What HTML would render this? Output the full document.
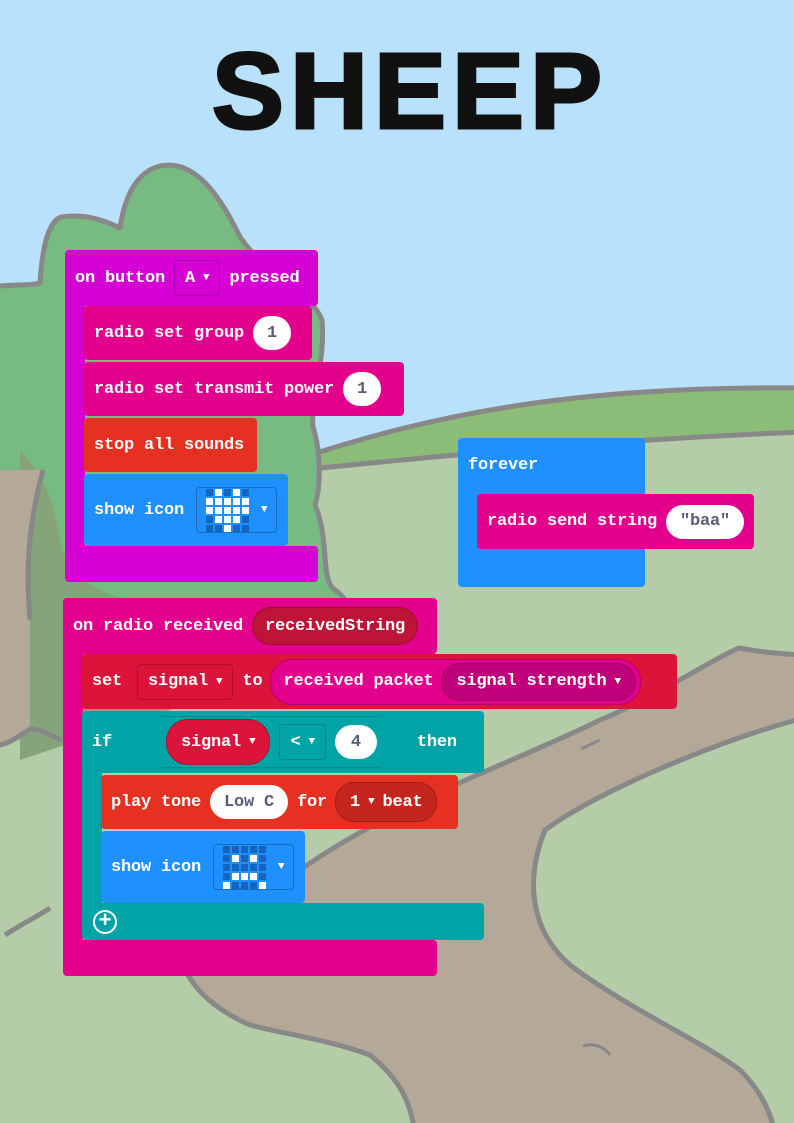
<!DOCTYPE html>
<html><head><meta charset="utf-8"><style>
body{margin:0;width:794px;height:1123px;overflow:hidden;position:relative;background:#b9e1fb;font-family:"Liberation Mono",monospace}
.b{position:absolute;box-sizing:border-box;border-radius:4px;color:#fff;font-weight:bold;font-size:17px;display:flex;align-items:center;padding-left:10px;white-space:nowrap;letter-spacing:-0.2px}
.f{display:inline-flex;align-items:center;justify-content:center;height:34px;border-radius:17px;background:#fff;color:#575e75;margin:0 9px;padding:0 14px}
.d{display:inline-flex;align-items:center;height:34px;border-radius:4px;margin:0 9px;padding:0 10px;border:1px solid rgba(0,0,0,.2)}
.r{display:inline-flex;align-items:center;height:38px;border-radius:19px;margin:0 8px;padding:0 14px;border:1px solid rgba(0,0,0,.2)}
.t{font-size:11px;margin-left:8px}
.lb{display:inline-flex;align-items:center;height:46px;padding:0 9px 0 9px;border:1px solid rgba(0,0,0,.25);border-radius:4px;margin-left:12px;box-sizing:border-box}
.led{display:inline-grid;grid-template-columns:repeat(5,7px);grid-auto-rows:7px;gap:2px}
.led i{background:#1565c0;display:block}
.led i.o{background:#fff}
</style></head><body>
<svg width="794" height="1123" style="position:absolute;left:0;top:0">
<g stroke="#888" stroke-width="5" stroke-linejoin="round">
<path d="M310 455 C420 420 560 385 804 388 L804 1133 L-10 1133 L-10 460 Z" fill="#8cbd78"/>
<path d="M300 470 C450 455 600 440 804 432 L804 1133 L-10 1133 L-10 480 Z" fill="#b4cda8"/>
<path d="M-10 287 C15 284 30 286 40 283 C42 250 48 220 62 217 C80 214 100 218 120 228 C124 200 135 172 160 166 C190 160 215 185 240 237 C270 280 310 290 322 320 C326 360 310 400 313 427 C322 455 320 490 315 505 C330 540 320 580 335 590 C350 600 355 620 352 640 L-10 700 Z" fill="#78bb82"/>
<path d="M20 450 C40 470 55 500 60 540 C70 600 140 600 200 615 L260 680 L20 760 Z" fill="#86a47a" stroke="none"/>
<path d="M-10 470 L43 470 C30 520 25 560 30 620 L30 729 C20 735 10 745 -10 747 Z" fill="#b4a898" stroke="none"/>
<path d="M43 470 C30 520 25 560 30 620" fill="none"/>
<path d="M-10 747 C10 745 20 735 30 729 C45 730 55 738 61 740" fill="none"/>
<path d="M300 870 C400 800 520 760 600 720 C660 695 710 660 739 648 C760 652 780 654 804 655 L804 718 C720 740 600 790 545 830 C525 880 530 930 570 965 C630 1010 700 1040 740 1070 C760 1090 770 1110 775 1133 L415 1133 C410 1100 400 1080 370 1055 C330 1040 284 1034 250 1025 C220 1012 190 990 182 960 L200 900 Z" fill="#b4a898"/>
<path d="M5 935 C20 925 40 915 50 908" fill="none"/>
<path d="M583 1046 C595 1042 605 1048 610 1055" fill="none" stroke-width="3"/>
<path d="M581 749 C590 745 595 742 600 740" fill="none" stroke-width="3"/>
</g></svg>
<div style="position:absolute;left:200px;top:28px;width:420px;text-align:center;font:bold 108px 'Liberation Sans',sans-serif;letter-spacing:6px;color:#111;-webkit-text-stroke:3px #111">SHEEP</div>

<!-- block 1 -->
<div class="b" style="left:65px;top:250px;width:253px;height:56px;background:#d400d4">on button<span class="d">A <span class="t">▼</span></span>pressed</div>
<div class="b" style="left:65px;top:300px;width:20px;height:260px;background:#d400d4;border-radius:0"></div>
<div class="b" style="left:65px;top:546px;width:253px;height:36px;background:#d400d4"></div>
<div class="b" style="left:84px;top:306px;width:228px;height:54px;background:#e3008c">radio set group<span class="f">1</span></div>
<div class="b" style="left:84px;top:362px;width:320px;height:54px;background:#e3008c">radio set transmit power<span class="f">1</span></div>
<div class="b" style="left:84px;top:418px;width:173px;height:54px;background:#e63022">stop all sounds</div>
<div class="b" style="left:84px;top:474px;width:204px;height:72px;background:#1e90ff">show icon<span class="lb"><span class="led"><i></i><i class="o"></i><i></i><i class="o"></i><i></i><i class="o"></i><i class="o"></i><i class="o"></i><i class="o"></i><i class="o"></i><i class="o"></i><i class="o"></i><i class="o"></i><i class="o"></i><i class="o"></i><i></i><i class="o"></i><i class="o"></i><i class="o"></i><i></i><i></i><i></i><i class="o"></i><i></i><i></i></span><span class="t" style="margin-left:12px">▼</span></span></div>

<!-- forever -->
<div class="b" style="left:458px;top:438px;width:187px;height:149px;background:#1e90ff;align-items:flex-start;padding-top:18px">forever</div>
<div class="b" style="left:477px;top:494px;width:277px;height:55px;background:#e3008c">radio send string<span class="f">"baa"</span></div>

<!-- block 2 -->
<div class="b" style="left:63px;top:598px;width:374px;height:56px;background:#e3008c">on radio received<span class="r" style="background:#be1437;height:36px;margin-left:9px;padding:0 12px">receivedString</span></div>
<div class="b" style="left:63px;top:650px;width:20px;height:300px;background:#e3008c;border-radius:0"></div>
<div class="b" style="left:63px;top:940px;width:374px;height:36px;background:#e3008c"></div>
<div class="b" style="left:82px;top:654px;width:595px;height:55px;background:#dc143c">set<span class="d" style="margin-left:15px">signal <span class="t">▼</span></span>to<span class="r" style="background:#e3008c;height:44px;border-radius:22px;padding:0 4px 0 12px">received packet<span class="r" style="background:#c0007a;height:36px;margin:0 0 0 8px">signal strength <span class="t">▼</span></span></span></div>
<div class="b" style="left:82px;top:711px;width:402px;height:62px;background:#00a4a6">if<span style="display:inline-flex;align-items:center;margin-left:26px;height:52px;padding:0 28px 0 28px;background:#00a4a6;box-shadow:inset 0 0 0 1px rgba(0,0,0,.15);clip-path:polygon(0 50%,24px 0,calc(100% - 24px) 0,100% 50%,calc(100% - 24px) 100%,24px 100%)"><span class="r" style="background:#dc143c;height:44px;border-radius:22px;margin:0">signal <span class="t">▼</span></span><span class="d" style="margin:0 9px">&lt; <span class="t">▼</span></span><span class="f" style="margin:0;padding:0 16px">4</span></span><span style="margin-left:12px">then</span></div>
<div class="b" style="left:82px;top:770px;width:20px;height:150px;background:#00a4a6;border-radius:0"></div>
<div class="b" style="left:82px;top:903px;width:402px;height:37px;background:#00a4a6"><span style="display:inline-flex;width:24px;height:24px;border:2px solid #fff;border-radius:50%;box-sizing:border-box;align-items:center;justify-content:center;font-size:22px;margin-left:1px;line-height:1">+</span></div>
<div class="b" style="left:101px;top:775px;width:357px;height:54px;background:#e63022">play tone<span class="f">Low C</span>for<span class="r" style="background:#c4261f;height:38px">1 <span class="t" style="margin:0 8px">▼</span>beat</span></div>
<div class="b" style="left:101px;top:831px;width:204px;height:72px;background:#1e90ff">show icon<span class="lb"><span class="led"><i></i><i></i><i></i><i></i><i></i><i></i><i class="o"></i><i></i><i class="o"></i><i></i><i></i><i></i><i></i><i></i><i></i><i></i><i class="o"></i><i class="o"></i><i class="o"></i><i></i><i class="o"></i><i></i><i></i><i></i><i class="o"></i></span><span class="t" style="margin-left:12px">▼</span></span></div>
</body></html>
